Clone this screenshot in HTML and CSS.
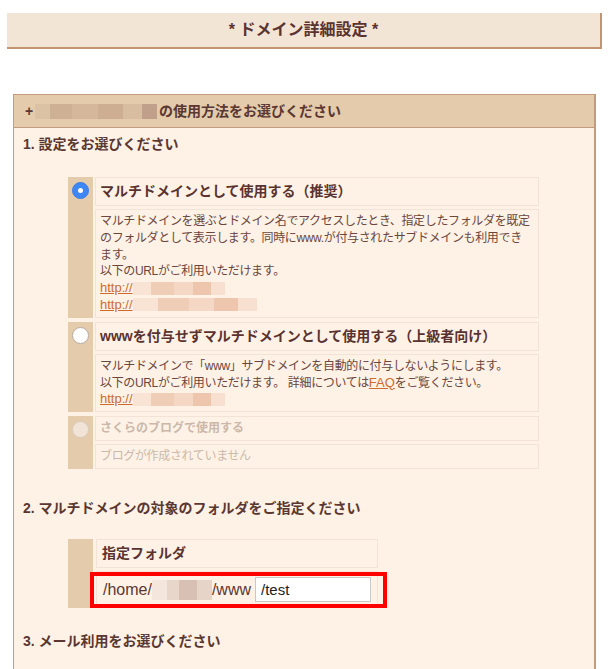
FILE: index.html
```html
<!DOCTYPE html>
<html lang="ja">
<head>
    <meta charset="UTF-8">
    <meta name="viewport" content="width=device-width, initial-scale=1.0">
    <title>ドメイン詳細設定</title>
    <link rel="stylesheet" href="styles.css">
</head>
<body>
    <div class="page">
        <h1 class="page-title">* ドメイン詳細設定 *</h1>

        <div class="panel">
            <div class="panel-head">+ <span class="blur blur-head"></span>の使用方法をお選びください</div>
            <div class="panel-body">
                <h2 class="step">1. 設定をお選びください</h2>

                <div class="choices">
                    <div class="choice">
                        <div class="choice-mark"><span class="radio checked"></span></div>
                        <div class="choice-title">マルチドメインとして使用する（推奨）</div>
                        <div class="choice-desc">
                            マルチドメインを選ぶとドメイン名でアクセスしたとき、指定したフォルダを既定<br>
                            のフォルダとして表示します。同時にwww.が付与されたサブドメインも利用でき<br>
                            ます。<br>
                            以下のURLがご利用いただけます。<br>
                            <a href="#" class="link">http://</a><span class="blur blur-link"></span><br>
                            <a href="#" class="link">http://</a><span class="blur blur-link long"></span>
                        </div>
                    </div>

                    <div class="choice">
                        <div class="choice-mark"><span class="radio"></span></div>
                        <div class="choice-title">wwwを付与せずマルチドメインとして使用する（上級者向け）</div>
                        <div class="choice-desc">
                            マルチドメインで「www」サブドメインを自動的に付与しないようにします。<br>
                            以下のURLがご利用いただけます。 詳細については<a href="#" class="link">FAQ</a>をご覧ください。<br>
                            <a href="#" class="link">http://</a><span class="blur blur-link"></span>
                        </div>
                    </div>

                    <div class="choice disabled">
                        <div class="choice-mark"><span class="radio"></span></div>
                        <div class="choice-title">さくらのブログで使用する</div>
                        <div class="choice-desc">ブログが作成されていません</div>
                    </div>
                </div>

                <h2 class="step">2. マルチドメインの対象のフォルダをご指定ください</h2>

                <div class="folder">
                    <div class="folder-mark"></div>
                    <div class="folder-title">指定フォルダ</div>
                    <div class="folder-row">
                        <span class="path">/home/</span><span class="blur blur-path"></span><span class="path">/www</span>
                        <input type="text" class="folder-input" value="/test">
                        <span class="highlight"></span>
                    </div>
                </div>

                <h2 class="step">3. メール利用をお選びください</h2>
            </div>
        </div>
    </div>
</body>
</html>
```

FILE: styles.css
```css
body {
    font-family: 'Liberation Sans', 'Noto Sans CJK JP', sans-serif;
    background-color: #ffffff;
    color: #5b3732;
    margin: 0;
    padding: 0;
}

.page {
    padding: 13px 8px 0 7px;
}

.page-title {
    margin: 0;
    height: 34px;
    line-height: 34px;
    background-color: #f3e5d5;
    border-right: 2px solid #c2946f;
    border-bottom: 2px solid #c2946f;
    text-align: center;
    font-size: 16px;
    font-weight: bold;
    color: #5a3331;
}

.panel {
    margin: 45px 0 0 6px;
    width: 580px;
    border: 1px solid #c29c7c;
    border-right-width: 2px;
    border-bottom: none;
}

.panel-head {
    height: 32px;
    line-height: 32px;
    padding-left: 11px;
    background-color: #e3cbab;
    border-bottom: 1px solid #c29c7c;
    font-size: 14px;
    font-weight: bold;
}

.panel-body {
    background-color: #fdf2e5;
    padding: 6px 9px 40px;
}

.step {
    margin: 0;
    font-size: 14px;
    line-height: 20px;
    font-weight: bold;
}

/* blurred (hidden) values */
.blur {
    display: inline-block;
    vertical-align: middle;
}

.blur-head {
    width: 122px;
    height: 15px;
    margin: -2px 2px 0 -2px;
    background: linear-gradient(90deg, #dcc2a5 0 12%, #ceb094 12% 30%, #d5b89c 30% 52%, #cdae93 52% 72%, #d8bda1 72% 88%, #c0a08a 88%);
}

.blur-link {
    width: 92px;
    height: 13px;
    margin-top: -2px;
    background: linear-gradient(90deg, #f8e3d4 0 20%, #f0cdb6 20% 45%, #f4d8c5 45% 65%, #eec6ad 65% 85%, #f7e0d0 85%);
}

.blur-link.long {
    width: 124px;
}

.blur-path {
    width: 60px;
    height: 20px;
    background: linear-gradient(90deg, #f4e6dc 0 25%, #e8d6ca 25% 45%, #d8c0b4 45% 75%, #e6d4c8 75%);
}

/* choices */
.choices {
    margin: 23px 0 29px 45px;
}

.choice {
    display: grid;
    grid-template-columns: 25px 444px;
    column-gap: 2px;
    row-gap: 3px;
    margin-bottom: 4px;
}

.choice-mark {
    grid-row: 1 / 3;
    background-color: #e3cbab;
    padding-top: 5px;
}

.choice-title,
.choice-desc {
    border: 1px solid #f2e3d6;
    padding: 3px 4px;
}

.choice-title {
    font-size: 14px;
    line-height: 21px;
    font-weight: bold;
    color: #5a3331;
}

.choice-desc {
    font-size: 12px;
    line-height: 16.8px;
    letter-spacing: -0.35px;
    color: #6a463e;
    white-space: nowrap;
}

.link {
    color: #cf6a2d;
    font-size: 13px;
    letter-spacing: 0;
}

.radio {
    display: block;
    width: 15px;
    height: 15px;
    margin: 0 auto;
    border-radius: 50%;
    background-color: #ffffff;
    border: 1px solid #b7aaa0;
    position: relative;
}

.radio.checked {
    background-color: #3d86f4;
    border-color: #3a7de6;
}

.radio.checked::after {
    content: "";
    position: absolute;
    left: 5px;
    top: 5px;
    width: 5px;
    height: 5px;
    border-radius: 50%;
    background-color: #ffffff;
}

.choice.disabled .choice-title,
.choice.disabled .choice-desc {
    font-size: 12px;
    line-height: 17px;
    color: #cbb8ab;
}

.choice.disabled .choice-desc {
    font-weight: normal;
}

.choice.disabled .radio {
    background-color: #f1e4d6;
    border-color: #dbcbbb;
}

/* folder */
.folder {
    display: grid;
    grid-template-columns: 25px 282px;
    column-gap: 3px;
    row-gap: 3px;
    margin: 21px 0 23px 45px;
}

.folder-mark {
    grid-row: 1 / 3;
    background-color: #e3cbab;
}

.folder-title {
    border: 1px solid #f2e3d6;
    padding: 3px 5px;
    font-size: 14px;
    line-height: 21px;
    font-weight: bold;
    color: #5a3331;
}

.folder-row {
    position: relative;
    border: 1px solid #f2e3d6;
    height: 35px;
    padding-left: 6px;
    display: flex;
    align-items: center;
}

.path {
    font-size: 16px;
    color: #5b3732;
}

.folder-input {
    margin-left: 4px;
    width: 116px;
    height: 25px;
    box-sizing: border-box;
    border: 1px solid #c9c9c9;
    padding: 0 5px;
    font-family: 'Liberation Sans', sans-serif;
    font-size: 15px;
    color: #222222;
    background-color: #ffffff;
}

.highlight {
    position: absolute;
    left: -7px;
    right: -10px;
    top: 0;
    bottom: -1px;
    border: 4px solid #ff0000;
    pointer-events: none;
}
```
